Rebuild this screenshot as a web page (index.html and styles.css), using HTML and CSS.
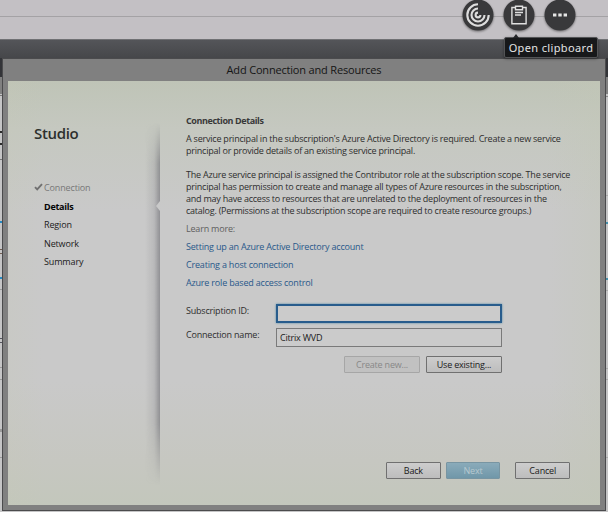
FILE: index.html
```html
<!DOCTYPE html>
<html lang="en">
<head>
<meta charset="utf-8">
<title>Add Connection and Resources</title>
<link rel="stylesheet" href="styles.css">
</head>
<body>
<div class="desktop">
  <div class="top-strip"></div>
  <div class="dark-bar"></div>
  <div class="app-behind"></div>

  <section class="dialog">
    <header class="titlebar"><span>Add Connection and Resources</span></header>
    <div class="content">
      <nav class="sidebar">
        <h1><span>Studio</span></h1>
        <ul>
          <li class="done"><svg class="check" viewBox="0 0 9 8"><path d="M1 4.2 3.2 6.4 8 1.2" /></svg><span>Connection</span></li>
          <li class="current"><span>Details</span></li>
          <li><span>Region</span></li>
          <li><span>Network</span></li>
          <li><span>Summary</span></li>
        </ul>
        <div class="edge-shadow"></div>
        <svg class="notch" viewBox="0 0 4 10"><path d="M4 0 0 5 4 10Z" /></svg>
      </nav>
      <main>
        <h2><span>Connection Details</span></h2>
        <p class="intro"><span class="l1">A service principal in the subscription's Azure Active Directory is required. Create a new service</span><br><span class="l2">principal or provide details of an existing service principal.</span></p>
        <p class="scope"><span class="l3">The Azure service principal is assigned the Contributor role at the subscription scope. The service</span><br><span class="l4">principal has permission to create and manage all types of Azure resources in the subscription,</span><br><span class="l5">and may have access to resources that are unrelated to the deployment of resources in the</span><br><span class="l6">catalog. (Permissions at the subscription scope are required to create resource groups.)</span></p>
        <p class="learn"><span>Learn more:</span></p>
        <a><span>Setting up an Azure Active Directory account</span></a>
        <a><span>Creating a host connection</span></a>
        <a><span>Azure role based access control</span></a>
        <div class="form">
          <label><span>Subscription ID:</span></label><div class="field focused"></div>
          <label><span>Connection name:</span></label><div class="field"><span>Citrix WVD</span></div>
        </div>
        <div class="actions">
          <div class="button disabled"><span>Create new...</span></div>
          <div class="button"><span>Use existing...</span></div>
        </div>
        <footer>
          <div class="button"><span>Back</span></div>
          <div class="button next"><span>Next</span></div>
          <div class="button cancel"><span>Cancel</span></div>
        </footer>
      </main>
    </div>
  </section>

  <svg class="behind left" viewBox="0 0 2 453" preserveAspectRatio="none">
    <path fill="#333438" d="M0 0h2v19H0z" /><path fill="#808080" d="M0 19h2v17H0z" />
    <path fill="#777" d="M0 37h2v1H0zM0 101h2v1H0z" />
    <path fill="#2c2c2c" d="M0 73h2v2H0zM0 85h2v2H0z" />
    <path fill="#2589c2" d="M0 163h2v2H0zM0 219h2v2H0z" />
    <path fill="#705d52" d="M0 191h2v1H0zM0 195h2v1H0z" />
    <path fill="#56565f" d="M0 280h2v1H0zM0 284h2v1H0z" />
    <path fill="#999" d="M0 231h2v1H0zM0 309h2v1H0zM0 321h2v1H0zM0 371h2v3H0zM0 399h2v1H0z" />
  </svg>
  <svg class="behind right" viewBox="0 0 2 453" preserveAspectRatio="none">
    <path fill="#333438" d="M0 0h2v19H0z" /><path fill="#808080" d="M0 19h2v17H0z" />
    <path fill="#888" d="M0 38h2v1H0z" />
    <path fill="#438eaa" d="M0 164h2v2H0zM0 220h2v2H0z" />
    <path fill="#aaa" d="M0 137h2v1H0zM0 232h2v1H0zM0 310h2v1H0zM0 321h2v1H0zM0 399h2v1H0z" />
  </svg>

  <div class="toolbar">
    <svg viewBox="0 0 32 32"><circle cx="16" cy="16" r="15.5" /><g class="swirl"><path d="M16 5.3A10.7 10.7 0 1 0 26.7 16" /><path d="M16 9.5A6.5 6.5 0 1 0 22.5 16" /><path d="M16 13.6A2.4 2.4 0 1 0 18.4 16" /></g></svg>
    <svg viewBox="0 0 32 32"><circle cx="16" cy="16" r="15.5" /><path class="line" d="M12.5 8.5H8.9v16.3h14.2V8.5H19.5M12.5 7.2h7v3.6h-7zM12 13.5h8M12 16h6" /></svg>
    <svg viewBox="0 0 32 32"><circle cx="16" cy="16" r="15.5" /><path class="dots" d="M9 14.5h3.4v3H9zM14.3 14.5h3.4v3h-3.4zM19.6 14.5H23v3h-3.4z" /></svg>
  </div>
  <div class="tooltip"><span>Open clipboard</span></div>
</div>
</body>
</html>
```
FILE: styles.css
```css
* { box-sizing: border-box; }
body {
  margin: 0;
  font: 9px/12px "Open Sans", "Noto Sans", sans-serif;
  color: #2e2e2e;
}
h1, h2, p, ul { margin: 0; padding: 0; font-size: inherit; }
span { white-space: nowrap; }
.desktop {
  position: relative;
  width: 608px;
  height: 512px;
  overflow: hidden;
  background: #c5c5c6;
}
.top-strip {
  height: 39px;
  background: linear-gradient(#a4a2a5, #a4a2a5) 0 16px / 100% 1px no-repeat #c3c0c4;
}
.dark-bar {
  height: 38px;
  border-top: 1px solid #707174;
  background: linear-gradient(#545559, #454649 19px, #333438);
}
.app-behind { height: 435px; background: #c5c5c6; }

.dialog {
  position: absolute;
  left: 2px;
  top: 58px;
  width: 604px;
  height: 453px;
  padding: 0 5px 5px;
  border: 1px solid #4b4b4d;
  background: #808080;
}
.titlebar {
  height: 22px;
  font-size: 11px;
  line-height: 22px;
  text-align: center;
  color: #151515;
}
.titlebar span { letter-spacing: -0.18px; }
.content {
  display: flex;
  height: 424px;
  background:
    linear-gradient(90deg, rgba(197, 200, 180, .2), transparent 35px 540px, rgba(194, 199, 181, .35)),
    linear-gradient(#bfc4b7, #c5c8c0 48px, #c9c9c9 130px 300px, #c6c7c1 380px, #c3c7bc);
}
.sidebar { position: relative; flex: none; width: 152px; padding-left: 26px; letter-spacing: -0.14px; }
h1 {
  margin-top: 42px;
  font-size: 15px;
  line-height: 20px;
  font-weight: 600;
  letter-spacing: -0.35px;
  color: #2d302d;
}
ul { margin-top: 36px; list-style: none; }
li {
  display: flex;
  height: 18.5px;
  padding-left: 10px;
  line-height: 18.5px;
  color: #202020;
}
.done { padding-left: 0; color: #777; }
.check { width: 9px; height: 8px; margin: 4px 1px 0 0; fill: none; stroke: #707070; stroke-width: 1.9; }
.current { font-weight: 700; letter-spacing: -0.27px; color: #050505; }
.edge-shadow {
  position: absolute;
  right: 0;
  top: 42px;
  width: 15px;
  height: 362px;
  background: linear-gradient(90deg, transparent, rgba(115, 115, 122, .17) 60%, rgba(90, 90, 98, .5));
  mask-image: linear-gradient(transparent, #000 40px 300px, transparent);
}
.notch { position: absolute; right: 0; top: 120px; width: 4px; height: 10px; fill: #c9c9c9; }

main { flex: none; width: 440px; padding: 34px 30px 0 26px; letter-spacing: -0.2px; }
h2 { font-weight: 700; letter-spacing: -0.41px; color: #393939; }
.intro { margin-top: 6px; }
.scope { margin-top: 12px; }
.l1 { letter-spacing: -0.217px; }
.l2 { letter-spacing: -0.22px; }
.l3 { letter-spacing: -0.22px; }
.l4 { letter-spacing: -0.225px; }
.l5 { letter-spacing: -0.235px; }
.l6 { letter-spacing: -0.24px; }
.learn { margin: 6px 0; color: #606060; }
a { display: block; height: 18px; letter-spacing: -0.19px; color: #28588a; }
.form {
  display: grid;
  grid-template-columns: 90px 226px;
  grid-auto-rows: 19px;
  row-gap: 5px;
  margin-top: 9px;
}
.form label { padding-top: 1px; }
.field {
  padding-left: 3px;
  border: 1px solid #7a7a7a;
  line-height: 17px;
  color: #202020;
  background: #cbcbcb;
}
.focused { border: 2px solid #285c8c; box-shadow: 0 0 2px #4b87a8; }
.actions { display: flex; justify-content: flex-end; width: 316px; margin-top: 9px; gap: 6px; }
.button {
  width: 76px;
  height: 17px;
  border: 1px solid #707070;
  border-radius: 1px;
  line-height: 15px;
  text-align: center;
  color: #202020;
  background: linear-gradient(#cdcdcd, #bdbdbd);
}
.disabled { border-color: #a6a6a6; color: #888; background: #c1c1c1; }
footer { display: flex; gap: 5px; margin: 89px 0 0 200px; }
footer .button { width: 55px; }
footer .next { border-color: #7895a2; color: #b7c9d0; background: linear-gradient(#8aabba, #7097a9); }
footer .cancel { margin-left: 10px; }

.behind { position: absolute; top: 58px; width: 2px; height: 453px; }
.left { left: 0; }
.right { right: 0; }
.toolbar { position: absolute; left: 462px; top: -1px; display: flex; gap: 9px; }
.toolbar svg { width: 32px; height: 32px; filter: drop-shadow(0 1px 1px rgba(0, 0, 0, .45)); }
.toolbar circle { fill: #39393b; }
.swirl { fill: none; stroke: #ddd; stroke-width: 2.1; }
.line { fill: none; stroke: #e0e0e0; stroke-width: 1.4; }
.dots { fill: #e5e5e5; }
.tooltip {
  position: absolute;
  left: 504px;
  top: 37px;
  width: 94px;
  height: 21px;
  border: 1px solid #535456;
  border-radius: 2px;
  font: 11px/19px "Noto Sans", sans-serif;
  letter-spacing: 0.36px;
  text-align: center;
  color: #e4e4e4;
  background: #17181a;
  box-shadow: 0 1px 3px rgba(0, 0, 0, .4);
}
.tooltip::before {
  content: "";
  position: absolute;
  left: 8px;
  top: -4px;
  border: 3px solid transparent;
  border-top: 0;
  border-bottom: 4px solid #252629;
}
```
